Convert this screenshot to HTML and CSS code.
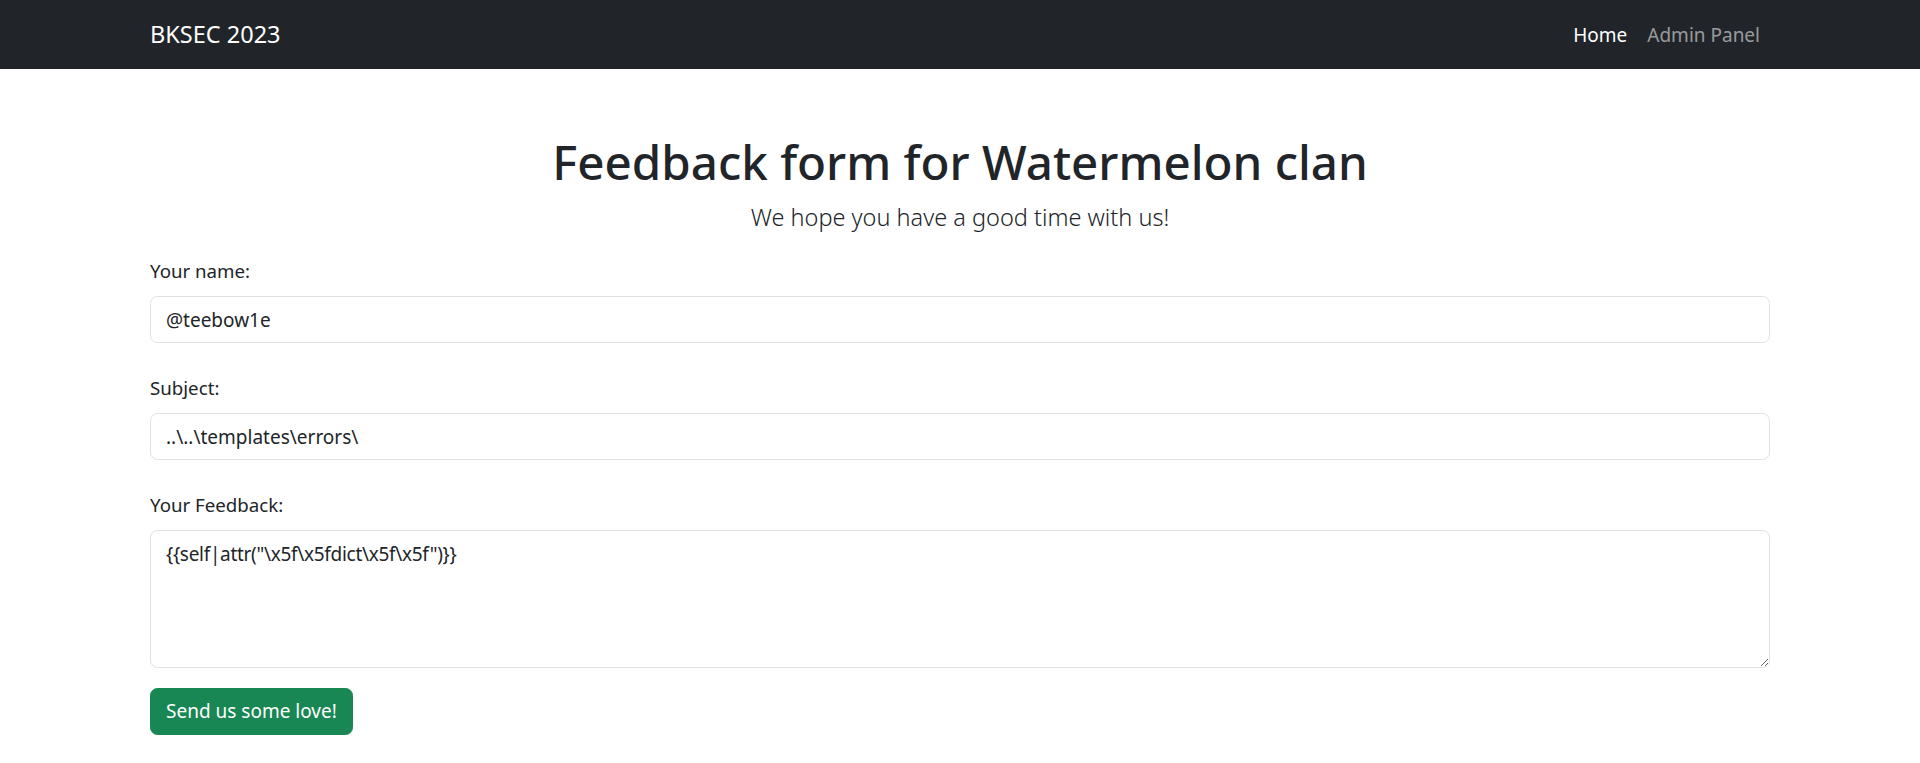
FILE: index.html
```html
<!DOCTYPE html>
<html lang="en">
<head>
<meta charset="utf-8">
<title>BKSEC 2023</title>
<link rel="stylesheet" href="styles.css">
</head>
<body>
<nav class="navbar">
  <div class="container nav-inner">
    <a class="brand" href="#">BKSEC 2023</a>
    <ul class="nav-links">
      <li><a class="nav-link active" href="#">Home</a></li>
      <li><a class="nav-link" href="#">Admin Panel</a></li>
    </ul>
  </div>
</nav>
<main class="container main">
  <header class="hero">
    <h1 class="title">Feedback form for Watermelon clan</h1>
    <p class="lead">We hope you have a good time with us!</p>
  </header>
  <form class="form">
    <div class="group">
      <label class="label" for="name">Your name:</label>
      <input class="control" id="name" type="text" value="@teebow1e">
    </div>
    <div class="group">
      <label class="label" for="subject">Subject:</label>
      <input class="control" id="subject" type="text" value="..\..\templates\errors\">
    </div>
    <div class="group last">
      <label class="label" for="fb">Your Feedback:</label>
      <textarea class="control area" id="fb" rows="4">{{self|attr("\x5f\x5fdict\x5f\x5f")}}</textarea>
    </div>
    <button class="btn" type="button">Send us some love!</button>
  </form>
</main>
</body>
</html>
```
FILE: styles.css
```css
* { box-sizing: border-box; }
html, body { margin: 0; padding: 0; }
body {
  font-family: "Noto Sans", "Open Sans", sans-serif;
  font-size: 20px;
  line-height: 30px;
  color: #212529;
  background: #fff;
}
.container {
  max-width: 1650px;
  margin: 0 auto;
  padding: 0 15px;
}
.navbar {
  background: #212529;
  padding: 9.5px 0;
}
.nav-inner {
  display: flex;
  align-items: center;
  justify-content: space-between;
}
.brand {
  color: #fff;
  text-decoration: none;
  font-size: 23.5px;
  line-height: 37.5px;
  padding: 6.25px 0;
}
.nav-links {
  list-style: none;
  margin: 0;
  padding: 0;
  display: flex;
}
.nav-link {
  display: block;
  padding: 10px;
  font-size: 19px;
  line-height: 30px;
  color: rgba(255,255,255,.55);
  text-decoration: none;
}
.nav-link.active { color: #fff; }
.main { margin-top: 63px; }
.hero { text-align: center; }
.title {
  margin: 0 0 6.5px;
  font-size: 47.5px;
  font-weight: 500;
  line-height: 60px;
}
.lead {
  margin: 0 0 20px;
  font-size: 23.5px;
  font-weight: 300;
  line-height: 37.5px;
  color: #212529;
}
.group { margin-bottom: 30px; }
.group.last { margin-bottom: 20px; }
.label {
  display: block;
  margin-bottom: 10px;
  font-size: 18.7px;
}
.control {
  display: block;
  width: 100%;
  font-family: inherit;
  font-size: 19px;
  line-height: 30px;
  color: #212529;
  padding: 7.5px 15px;
  border: 1.25px solid #dee2e6;
  border-radius: 7.5px;
  background: #fff;
  outline: none;
}
.area {
  height: 137.5px;
  resize: vertical;
  letter-spacing: -0.3px;
}
.btn {
  font-family: inherit;
  font-size: 19px;
  line-height: 30px;
  color: #fff;
  background: #198754;
  border: 1.25px solid #198754;
  border-radius: 7.5px;
  padding: 7.5px 15px;
  cursor: pointer;
}
```
